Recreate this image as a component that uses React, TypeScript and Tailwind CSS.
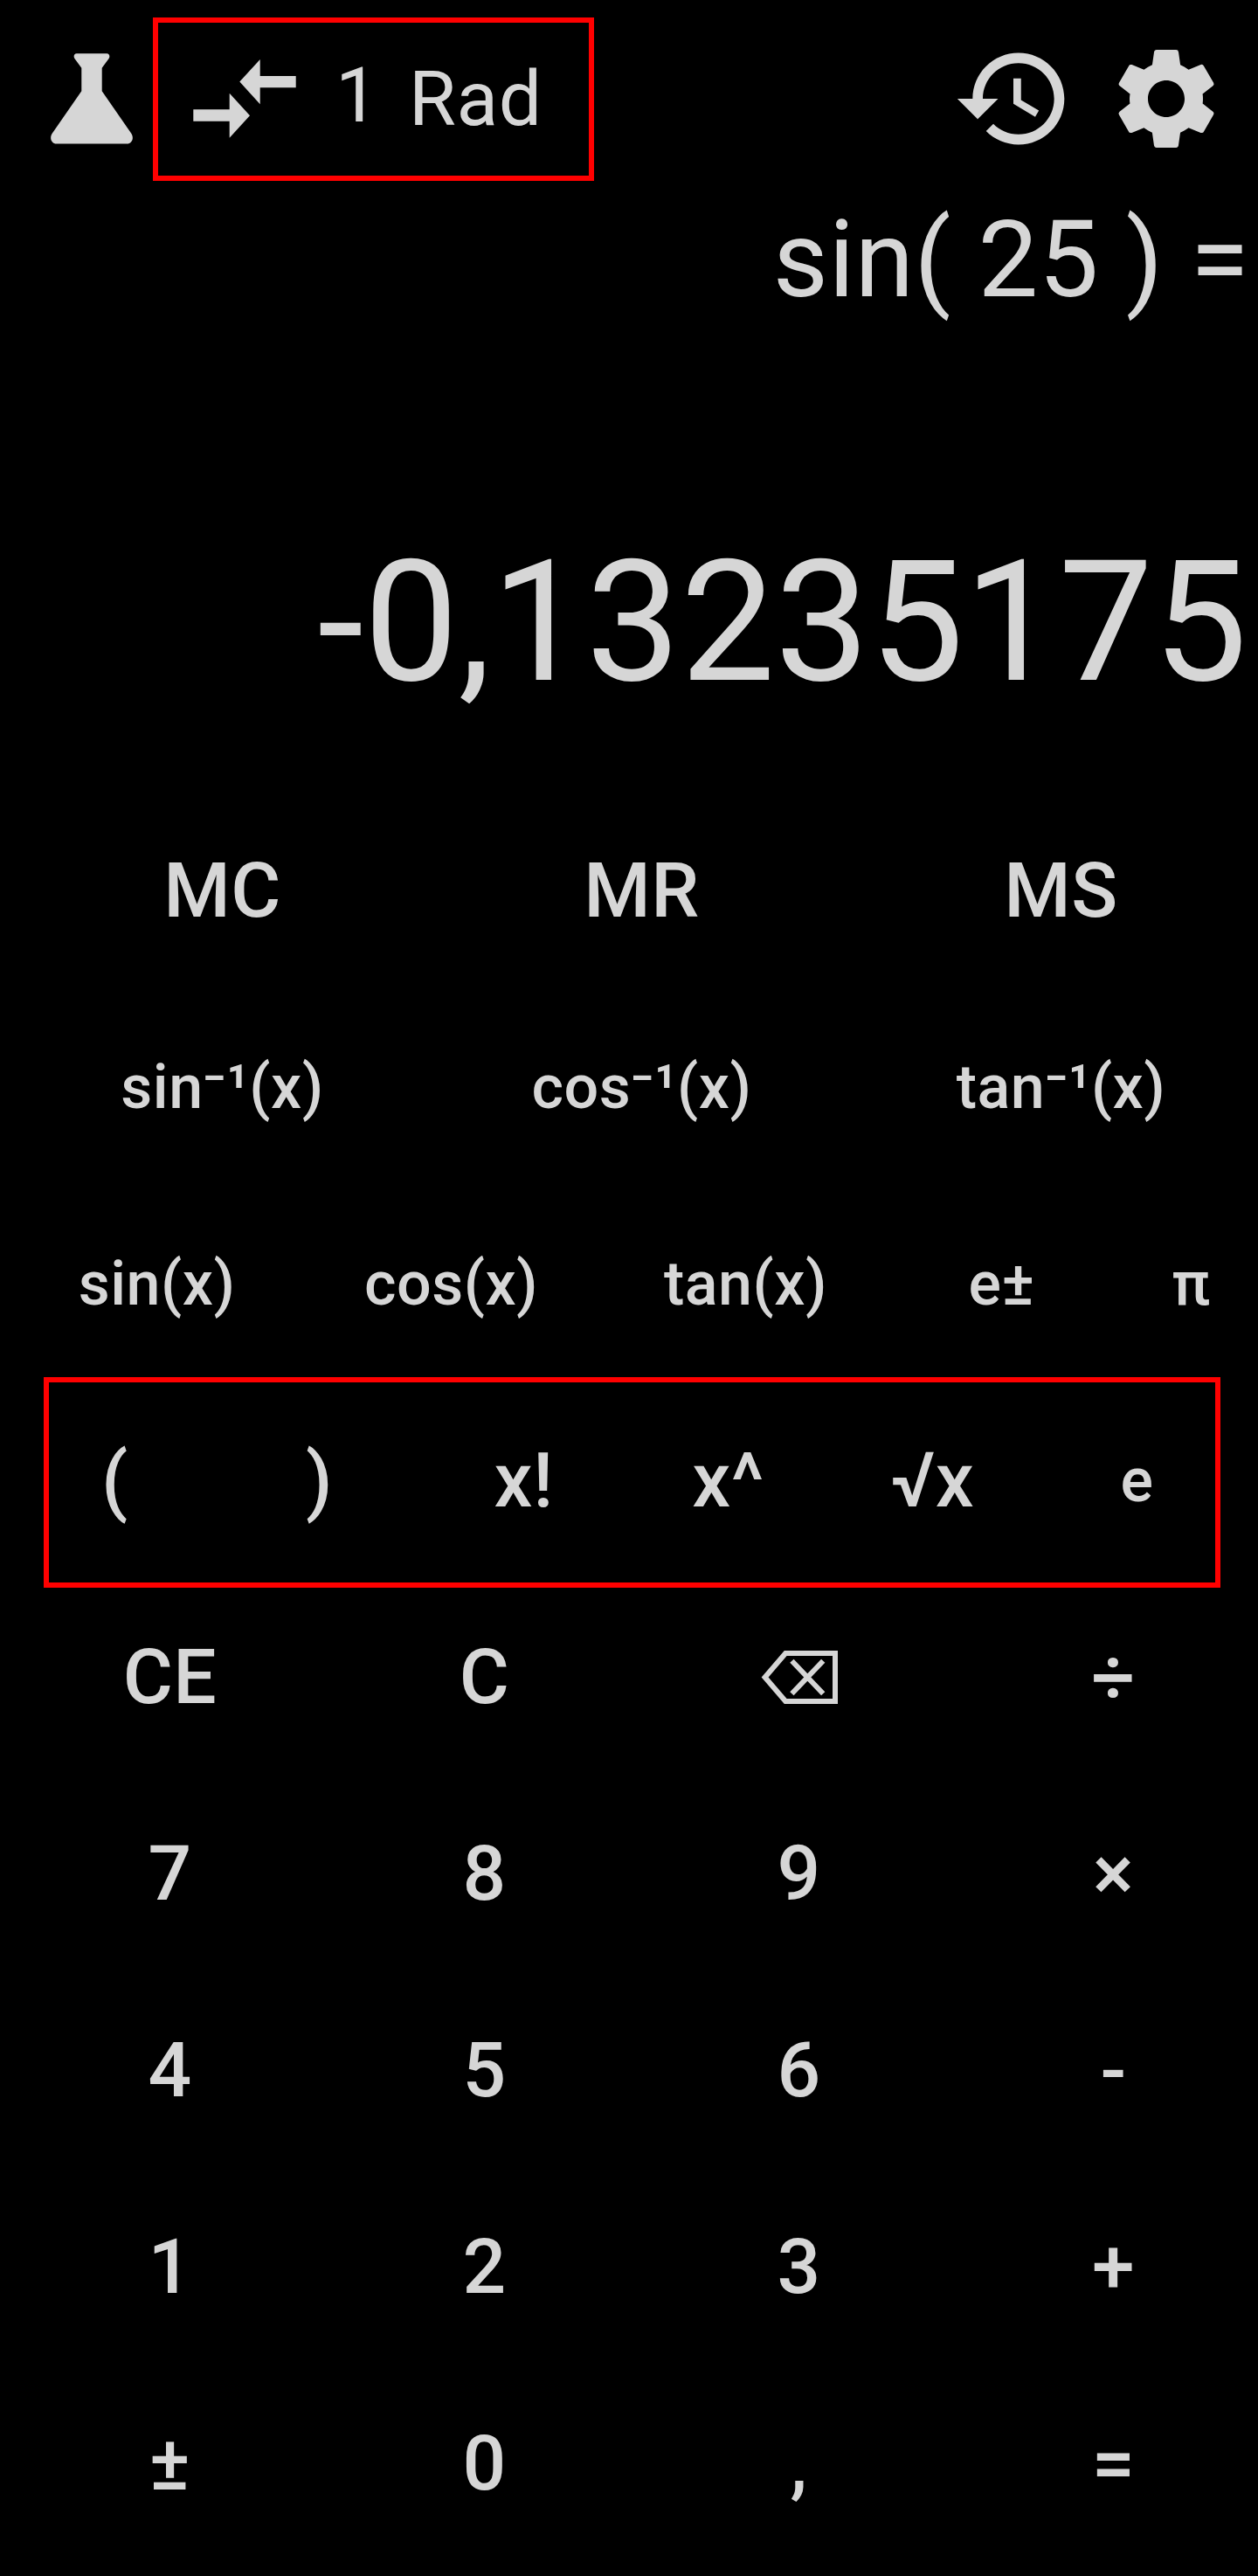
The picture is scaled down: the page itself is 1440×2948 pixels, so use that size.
import { MdSettings } from "react-icons/md";

const FUNCS = [
  { label: "sin(x)", w: "w-[330px]" },
  { label: "cos(x)", w: "w-[344px]" },
  { label: "tan(x)", w: "w-[330px]" },
  { label: "e±", w: "w-[256px]" },
  { label: "π", w: "w-[178px]" },
];

const PAD = [
  ["CE", "C", "⌫", "÷"],
  ["7", "8", "9", "×"],
  ["4", "5", "6", "-"],
  ["1", "2", "3", "+"],
  ["±", "0", ",", "="],
];

const key = "flex h-full shrink-0 items-center justify-center font-medium";
const smallKeys = "flex h-[225px] pb-[2px] text-[70px]";

function Flask() {
  return (
    <svg className="h-[104px] w-[94px]" viewBox="0 0 94 104" fill="currentColor">
      <path d="M29.7 0.3H64.3C67.2 0.3 68.2 3.6 66.6 6L58.7 16.7V43.300L92.300 91.700C96 97.500 92.500 103.500 87.500 103.500H6.500C1.500 103.500-2 97.500 1.700 91.700L35.300 43.300V16.700L27.400 6C25.800 3.600 26.800 0.300 29.700 0.300Z" />
    </svg>
  );
}

function CompareArrows() {
  return (
    <svg className="h-[140px] w-[140px]" viewBox="0 0 140 140" fill="currentColor">
      <path d="M11.300 82.300H52.700V63.700L76 89.200L52.700 114.700V95.700H11.300Z" />
      <path d="M128.700 57.300H87.700V76.300L64.300 50.400L87.700 25V44H128.700Z" />
    </svg>
  );
}

function History() {
  return (
    <svg className="h-[140px] w-[140px]" viewBox="0 0 24 24" fill="currentColor">
      <path d="M13 3c-4.970 0-9 4.030-9 9H1l3.890 3.890.070.140L9 12H6c0-3.870 3.130-7 7-7s7 3.130 7 7-3.130 7-7 7c-1.930 0-3.680-.790-4.940-2.060l-1.420 1.420C8.270 19.990 10.510 21 13 21c4.970 0 9-4.030 9-9s-4.030-9-9-9zm-1 5v5l4.280 2.540.720-1.210-3.500-2.080V8H12z" />
    </svg>
  );
}

function Backspace() {
  return (
    <svg className="-mt-px h-[61px] w-[88px]" viewBox="0 0 88 61" fill="none" stroke="currentColor" strokeWidth="6">
      <path d="M28.200 3H85V58H28.200L4.600 30.500Z" />
      <path d="M35.400 11.800L71.200 49.200M71.200 11.800L35.400 49.200" />
    </svg>
  );
}

export default function App() {
  return (
    <div className="relative h-[2948px] w-[1440px] overflow-hidden bg-black font-['Roboto',sans-serif] text-[87.5px] leading-none text-[#d6d6d6]">
      <header className="flex h-[226px] items-start pt-[43px]">
        <div className="ml-[58px] mt-[18px]">
          <Flask />
        </div>
        <div className="ml-[58px]">
          <CompareArrows />
        </div>
        <span className="ml-[34px] mt-[23px] w-[50px]">1</span>
        <span className="ml-[34px] mt-[27px] w-[170px] tracking-[0.6px]">Rad</span>
        <div className="ml-auto mr-[35px] flex gap-[35px]">
          <History />
          <MdSettings className="h-[140px] w-[140px]" />
        </div>
      </header>

      <section className="flex h-[681.500px] flex-col items-end whitespace-pre">
        <div className="mt-[10px] pr-[10px] text-[122.5px] tracking-[0.35px]">sin( 25 ) =</div>
        <div className="mt-[257px] pr-[12px] text-[192.5px]">-0,13235175</div>
      </section>

      <main className="ml-[14.5px] tracking-[0.5px]">
        <div className="flex h-[225px]">
          {["MC", "MR", "MS"].map((t) => (
            <button key={t} className={`${key} w-[480px]`}>{t}</button>
          ))}
        </div>
        <div className={smallKeys}>
          {["sin⁻¹(x)", "cos⁻¹(x)", "tan⁻¹(x)"].map((t) => (
            <button key={t} className={`${key} w-[480px]`}>{t}</button>
          ))}
        </div>
        <div className={smallKeys}>
          {FUNCS.map((f) => (
            <button key={f.label} className={`${key} ${f.w}`}>{f.label}</button>
          ))}
        </div>
        <div className="flex h-[225px]">
          {["(", ")", "x!", "x^", "√x"].map((t) => (
            <button key={t} className={`${key} w-[234px]`}>{t}</button>
          ))}
          <button className={`${key} w-[234px] pb-[2px] text-[70px]`}>e</button>
        </div>
        {PAD.map((row) => (
          <div key={row[0]} className="flex h-[225px]">
            {row.map((t) => (
              <button key={t} className={`${key} w-[360px]`}>{t === "⌫" ? <Backspace /> : t}</button>
            ))}
          </div>
        ))}
      </main>

      {/* Highlight frames laid over the toolbar and the function row */}
      <div className="absolute top-[20px] left-[175px] h-[187px] w-[505px] border-[6px] border-[#ff0000]" />
      <div className="absolute top-[1576px] left-[50px] h-[241px] w-[1347px] border-[6px] border-[#ff0000]" />
    </div>
  );
}
